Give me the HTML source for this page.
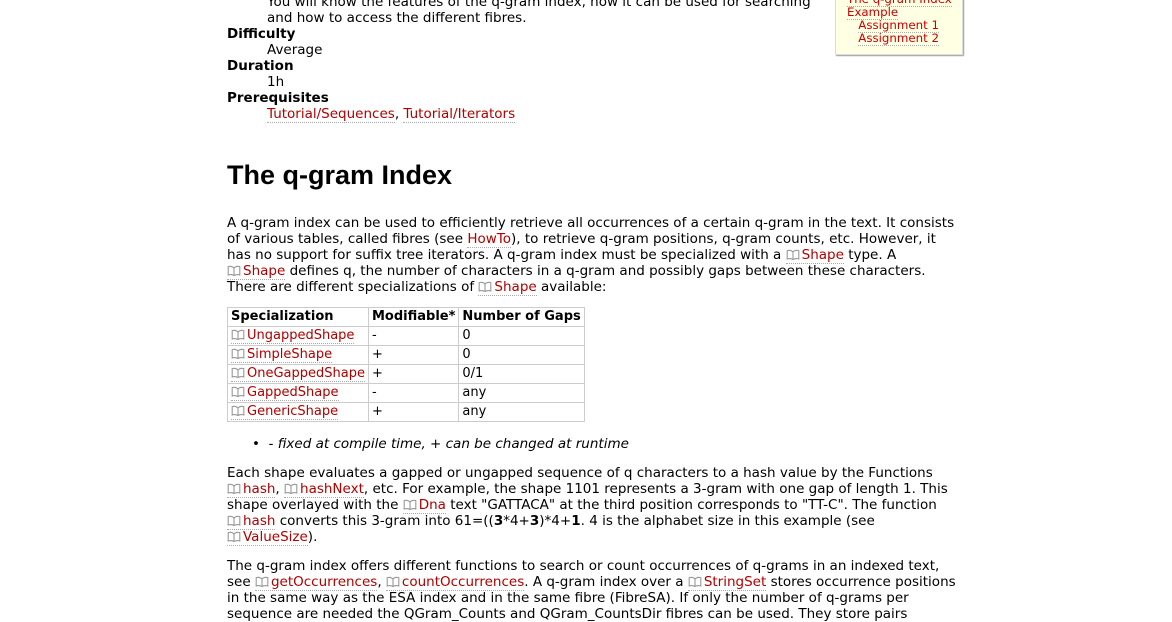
<!DOCTYPE html>
<html><head><meta charset="utf-8"><style>
body{margin:0;width:1172px;height:610px;overflow:hidden;background:#fff;font-family:"DejaVu Sans","Liberation Sans",sans-serif;font-size:13.5px;color:#000;position:relative}
.l{position:absolute;left:227px;white-space:nowrap;line-height:16px}
.d{left:267px}
b{font-weight:bold}
a{color:#b00000;text-decoration:none;border-bottom:1px dotted #aaa}
.bk{display:inline-block;width:14px;height:11px;margin-right:2px;vertical-align:-1px}
h1{position:absolute;left:227px;top:158px;margin:0;font-family:"Liberation Sans",sans-serif;font-size:27px;font-weight:bold;line-height:34px}
table{position:absolute;left:227px;top:307px;border-collapse:collapse;line-height:16px;font-size:13px}
td,th{border:1px solid #ccc;padding:1px 3px 1px 3px;text-align:left;white-space:nowrap}
th{font-weight:bold}
.toc{position:absolute;left:835px;top:-8px;width:115px;height:61px;background:#ffffe4;border:1px solid #ddd;box-shadow:1px 1px 1px #999;padding:0 0 0 11px;line-height:13px;font-size:11.8px}
.toc a{color:#c00}
</style></head><body>
<svg width="0" height="0" style="position:absolute"><defs><symbol id="b" viewBox="0 0 14 11"><path d="M7 3C5.5 1.3 3.2 1 1.2 1.6V10C3.2 9.4 5.5 9.6 7 10.6C8.5 9.6 10.8 9.4 12.8 10V1.6C10.8 1 8.5 1.3 7 3ZM7 3V10.6" fill="none" stroke="#999" stroke-width="1.1"/></symbol></defs></svg>
<div class="toc"><a>The q-gram Index</a><br><a>Example</a><br>&nbsp;&nbsp;&nbsp;<a>Assignment 1</a><br>&nbsp;&nbsp;&nbsp;<a>Assignment 2</a></div>
<div class="l d" style="top:-6px">You will know the features of the q-gram index, how it can be used for searching</div>
<div class="l d" style="top:10px">and how to access the different fibres.</div>
<div class="l" style="top:26px"><b>Difficulty</b></div>
<div class="l d" style="top:42px">Average</div>
<div class="l" style="top:58px"><b>Duration</b></div>
<div class="l d" style="top:74px">1h</div>
<div class="l" style="top:90px"><b>Prerequisites</b></div>
<div class="l d" style="top:106px"><a>Tutorial/Sequences</a>, <a>Tutorial/Iterators</a></div>
<h1>The q-gram Index</h1>
<div class="l" style="top:215px">A q-gram index can be used to efficiently retrieve all occurrences of a certain q-gram in the text. It consists</div>
<div class="l" style="top:231px">of various tables, called fibres (see <a>HowTo</a>), to retrieve q-gram positions, q-gram counts, etc. However, it</div>
<div class="l" style="top:247px">has no support for suffix tree iterators. A q-gram index must be specialized with a <a><svg class="bk"><use href="#b"/></svg>Shape</a> type. A</div>
<div class="l" style="top:263px"><a><svg class="bk"><use href="#b"/></svg>Shape</a> defines q, the number of characters in a q-gram and possibly gaps between these characters.</div>
<div class="l" style="top:279px">There are different specializations of <a><svg class="bk"><use href="#b"/></svg>Shape</a> available:</div>
<table>
<tr><th>Specialization</th><th>Modifiable*</th><th>Number of Gaps</th></tr>
<tr><td><a><svg class="bk"><use href="#b"/></svg>UngappedShape</a></td><td>-</td><td>0</td></tr>
<tr><td><a><svg class="bk"><use href="#b"/></svg>SimpleShape</a></td><td>+</td><td>0</td></tr>
<tr><td><a><svg class="bk"><use href="#b"/></svg>OneGappedShape</a></td><td>+</td><td>0/1</td></tr>
<tr><td><a><svg class="bk"><use href="#b"/></svg>GappedShape</a></td><td>-</td><td>any</td></tr>
<tr><td><a><svg class="bk"><use href="#b"/></svg>GenericShape</a></td><td>+</td><td>any</td></tr>
</table>
<div class="l" style="top:436px;left:252px">•&nbsp;&nbsp;<i>- fixed at compile time, + can be changed at runtime</i></div>
<div class="l" style="top:465px">Each shape evaluates a gapped or ungapped sequence of q characters to a hash value by the Functions</div>
<div class="l" style="top:481px"><a><svg class="bk"><use href="#b"/></svg>hash</a>, <a><svg class="bk"><use href="#b"/></svg>hashNext</a>, etc. For example, the shape 1101 represents a 3-gram with one gap of length 1. This</div>
<div class="l" style="top:497px">shape overlayed with the <a><svg class="bk"><use href="#b"/></svg>Dna</a> text "GATTACA" at the third position corresponds to "TT-C". The function</div>
<div class="l" style="top:513px"><a><svg class="bk"><use href="#b"/></svg>hash</a> converts this 3-gram into 61=((<b>3</b>*4+<b>3</b>)*4+<b>1</b>. 4 is the alphabet size in this example (see</div>
<div class="l" style="top:529px"><a><svg class="bk"><use href="#b"/></svg>ValueSize</a>).</div>
<div class="l" style="top:558px">The q-gram index offers different functions to search or count occurrences of q-grams in an indexed text,</div>
<div class="l" style="top:574px">see <a><svg class="bk"><use href="#b"/></svg>getOccurrences</a>, <a><svg class="bk"><use href="#b"/></svg>countOccurrences</a>. A q-gram index over a <a><svg class="bk"><use href="#b"/></svg>StringSet</a> stores occurrence positions</div>
<div class="l" style="top:590px">in the same way as the ESA index and in the same fibre (FibreSA). If only the number of q-grams per</div>
<div class="l" style="top:606px">sequence are needed the QGram_Counts and QGram_CountsDir fibres can be used. They store pairs</div>
</body></html>
